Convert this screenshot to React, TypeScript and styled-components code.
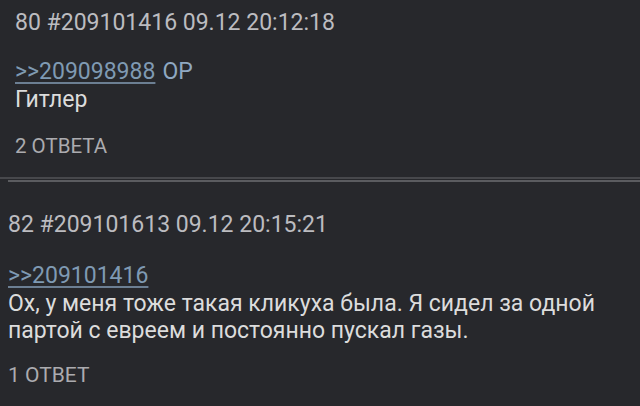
import React from 'react';
import styled, { createGlobalStyle } from 'styled-components';

const GlobalStyle = createGlobalStyle`
  html, body {
    margin: 0;
    padding: 0;
    background: #27282c;
  }
  body {
    font-family: Roboto, "Noto Sans", sans-serif;
    width: 640px;
    height: 406px;
    overflow: hidden;
  }
`;

const Thread = styled.div`
  display: flex;
  flex-direction: column;
  background: #27282c;
  min-height: 406px;
`;

const Post = styled.article<{ $indent: number; $top: number }>`
  display: flex;
  flex-direction: column;
  padding: ${p => p.$top}px 0 0 ${p => p.$indent}px;
`;

const Meta = styled.div`
  font-size: 23px;
  line-height: 27px;
  color: #bcbcc0;
  white-space: pre;
`;

const Body = styled.div<{ $gap: number }>`
  margin-top: ${p => p.$gap}px;
  font-size: 23px;
  line-height: 27.5px;
  color: #dcdcdc;
`;

const ReplyLink = styled.a`
  color: #7f9ab3;
  text-decoration: underline;
  text-decoration-color: #6c7f93;
  text-underline-offset: 3px;
  text-decoration-thickness: 1.5px;
`;

const OpMark = styled.span`
  color: #8fa8c2;
  margin-left: 7px;
`;

const Answers = styled.div<{ $gap: number; $size: number }>`
  margin-top: ${p => p.$gap}px;
  font-size: ${p => p.$size}px;
  line-height: 26px;
  color: #ababaf;
  text-transform: uppercase;
`;

const Divider = styled.div`
  display: flex;
  flex-direction: column;
  gap: 1px;
  margin-top: 18px;
`;

const Rule = styled.div<{ $indent: number; $color: string }>`
  height: 2px;
  margin-left: ${p => p.$indent}px;
  background: ${p => p.$color};
`;

const App = () => {
  return (
    <Thread>
      <GlobalStyle />
      <Post $indent={15} $top={9}>
        <Meta>80 #209101416 09.12 20:12:18</Meta>
        <Body $gap={22}>
          <div>
            <ReplyLink>&gt;&gt;209098988</ReplyLink>
            <OpMark>OP</OpMark>
          </div>
          <div>Гитлер</div>
        </Body>
        <Answers $gap={20} $size={20.5}>2 ответа</Answers>
      </Post>
      <Divider>
        <Rule $indent={0} $color="#47484c" />
        <Rule $indent={8} $color="#5b5c60" />
      </Divider>
      <Post $indent={8} $top={29}>
        <Meta>82 #209101613 09.12 20:15:21</Meta>
        <Body $gap={24}>
          <div>
            <ReplyLink>&gt;&gt;209101416</ReplyLink>
          </div>
          <div>Ох, у меня тоже такая кликуха была. Я сидел за одной</div>
          <div>партой с евреем и постоянно пускал газы.</div>
        </Body>
        <Answers $gap={17} $size={21}>1 ответ</Answers>
      </Post>
    </Thread>
  );
};

export default App;
